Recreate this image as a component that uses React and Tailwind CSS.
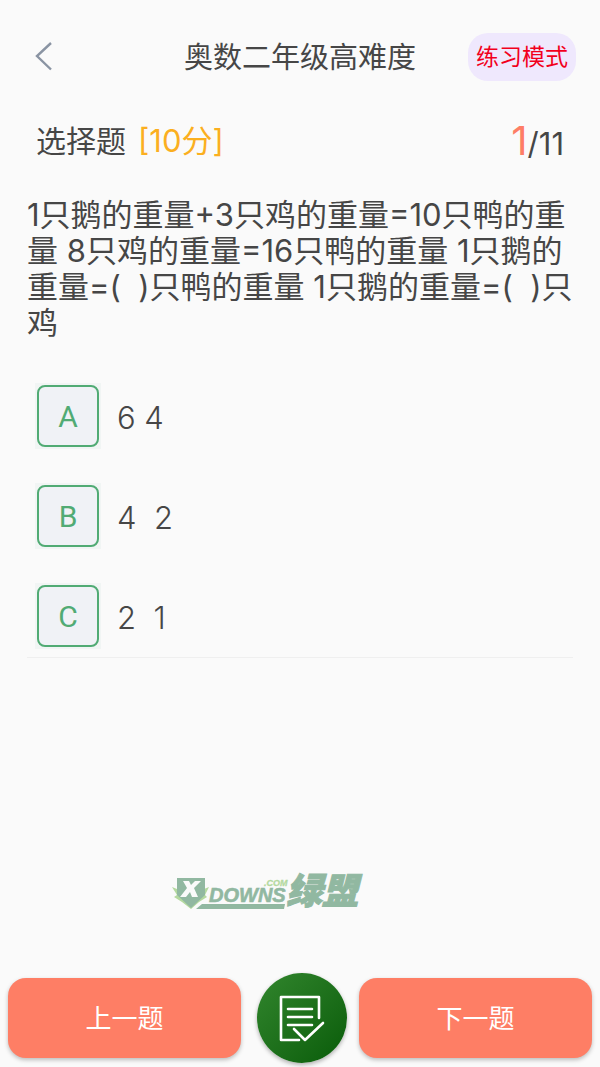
import React, { useState } from "react";

const options = [
  { key: "A", text: "6 4" },
  { key: "B", text: "4  2" },
  { key: "C", text: "2  1" },
];

const question =
  "1只鹅的重量+3只鸡的重量=10只鸭的重量 8只鸡的重量=16只鸭的重量 1只鹅的重量=(  )只鸭的重量 1只鹅的重量=(  )只鸡";

function Header() {
  return (
    <header className="grid grid-cols-[1fr_auto_1fr] items-center pt-8 px-6">
      <button type="button" aria-label="返回" className="w-8 h-12 flex items-center justify-end">
        <svg width="24" height="32" viewBox="0 0 24 32" fill="none" stroke="#8a94a3" strokeWidth="2.4">
          <path d="M19 2 5 15 19 28.500" />
        </svg>
      </button>
      <h1 className="pt-[2px] text-[29px] leading-[48px]">奥数二年级高难度</h1>
      <button
        type="button"
        className="justify-self-end w-[108px] h-12 rounded-[20px] bg-[#efe8fd] text-[#f2001c] text-[23px]"
      >
        练习模式
      </button>
    </header>
  );
}

function Option({ option, checked, onSelect }) {
  return (
    <label className="relative flex items-center cursor-pointer">
      <input
        type="radio"
        name="answer"
        value={option.key}
        checked={checked}
        onChange={onSelect}
        className="sr-only"
      />
      <span className="p-[2px] bg-[#f1f5f4]">
        <span className="flex items-center justify-center size-[62px] rounded-lg border-2 border-[#51ab74] bg-[#f0f2f6] text-[#51ab74] font-[Roboto,sans-serif] text-[30px]">
          {option.key}
        </span>
      </span>
      <span className="ml-4 pt-1 text-[31px] font-light whitespace-pre">{option.text}</span>
    </label>
  );
}

function Watermark() {
  return (
    <svg
      width="194"
      height="42"
      viewBox="0 0 194 42"
      className="ml-[171px] overflow-visible"
      fontFamily="'Liberation Sans', 'Noto Sans CJK SC', sans-serif"
      fontWeight="bold"
      fontStyle="italic"
    >
      <path d="M1 16l5 2 1-4 4 3h17l4-3 1 4 5-2-4 8 2 2-8 5-8 7-9-7-8-5 3-2z" fill="#b4d99f" />
      <path d="M6 7h28v17L20 37 6 24z" fill="#91b8a1" />
      <path d="M12 10h6l2 4 4-4h6l-7 7 4 9h-6l-2-5-4 5H9l7-9z" fill="#fafafa" />
      <path d="M31 33h83l-1 5H25z" fill="#91b8a1" />
      <text x="38" y="31" fontSize="20" fill="#91b8a1" stroke="#91b8a1" strokeWidth="0.6">
        DOWNS
      </text>
      <text x="93" y="15" fontSize="9" fill="#b4d99f" stroke="#b4d99f" strokeWidth="0.3">
        .COM
      </text>
      <text x="115" y="33" fontSize="36" fontFamily="'Noto Sans CJK SC', sans-serif" fontWeight="900" fill="#91b8a1" stroke="#91b8a1" strokeWidth="1">
        绿盟
      </text>
    </svg>
  );
}

function NavButton({ children }) {
  return (
    <button
      type="button"
      className="flex-1 h-20 rounded-[18px] bg-[#fe7e65] text-white text-[26px] shadow-[0_2px_4px_rgba(0,0,0,0.25)]"
    >
      {children}
    </button>
  );
}

export default function App() {
  const [answer, setAnswer] = useState("");

  return (
    <div className="min-h-screen flex flex-col bg-[#fafafa] text-[#464646] font-[Inter,'Noto_Sans_CJK_SC',sans-serif]">
      <Header />

      <main className="flex-1">
        {/* Question type and progress */}
        <div className="flex items-center justify-between mt-[31px] px-9">
          <p className="text-[30px] leading-[52px]">
            选择题<span className="ml-3 text-[31px] text-[#fbaf1f]">[10分]</span>
          </p>
          <p className="pt-1 text-[31px] leading-[48px]">
            <span className="text-[40px] text-[#fe7e65]">1</span>/11
          </p>
        </div>

        <p className="mt-[29px] ml-[27px] mr-6 text-[31px] leading-9 whitespace-pre-wrap">{question}</p>

        <div className="mx-[27px] mt-[42px] pl-2 pb-2 flex flex-col gap-[34px] border-b border-[#efefef]">
          {options.map((option) => (
            <Option
              key={option.key}
              option={option}
              checked={answer === option.key}
              onSelect={() => setAnswer(option.key)}
            />
          ))}
        </div>

        <div className="mt-[213px]">
          <Watermark />
        </div>
      </main>

      <footer className="flex items-center px-2 pb-1">
        <NavButton>上一题</NavButton>
        <button
          type="button"
          aria-label="答题卡"
          className="ml-4 mr-3 size-[90px] rounded-full bg-linear-to-br from-[#31862d] to-[#075c08] shadow-[0_2px_4px_rgba(0,0,0,0.3)]"
        >
          <svg width="90" height="90" viewBox="0 0 90 90" fill="none" stroke="#fff" strokeWidth="2.6" strokeLinecap="round" strokeLinejoin="round">
            <path d="M42 67H24V24h38v21" />
            <path d="M31 36h24M31 44h24M31 52h24" />
            <path d="M37 56l11 11 18-17" />
          </svg>
        </button>
        <NavButton>下一题</NavButton>
      </footer>
    </div>
  );
}
